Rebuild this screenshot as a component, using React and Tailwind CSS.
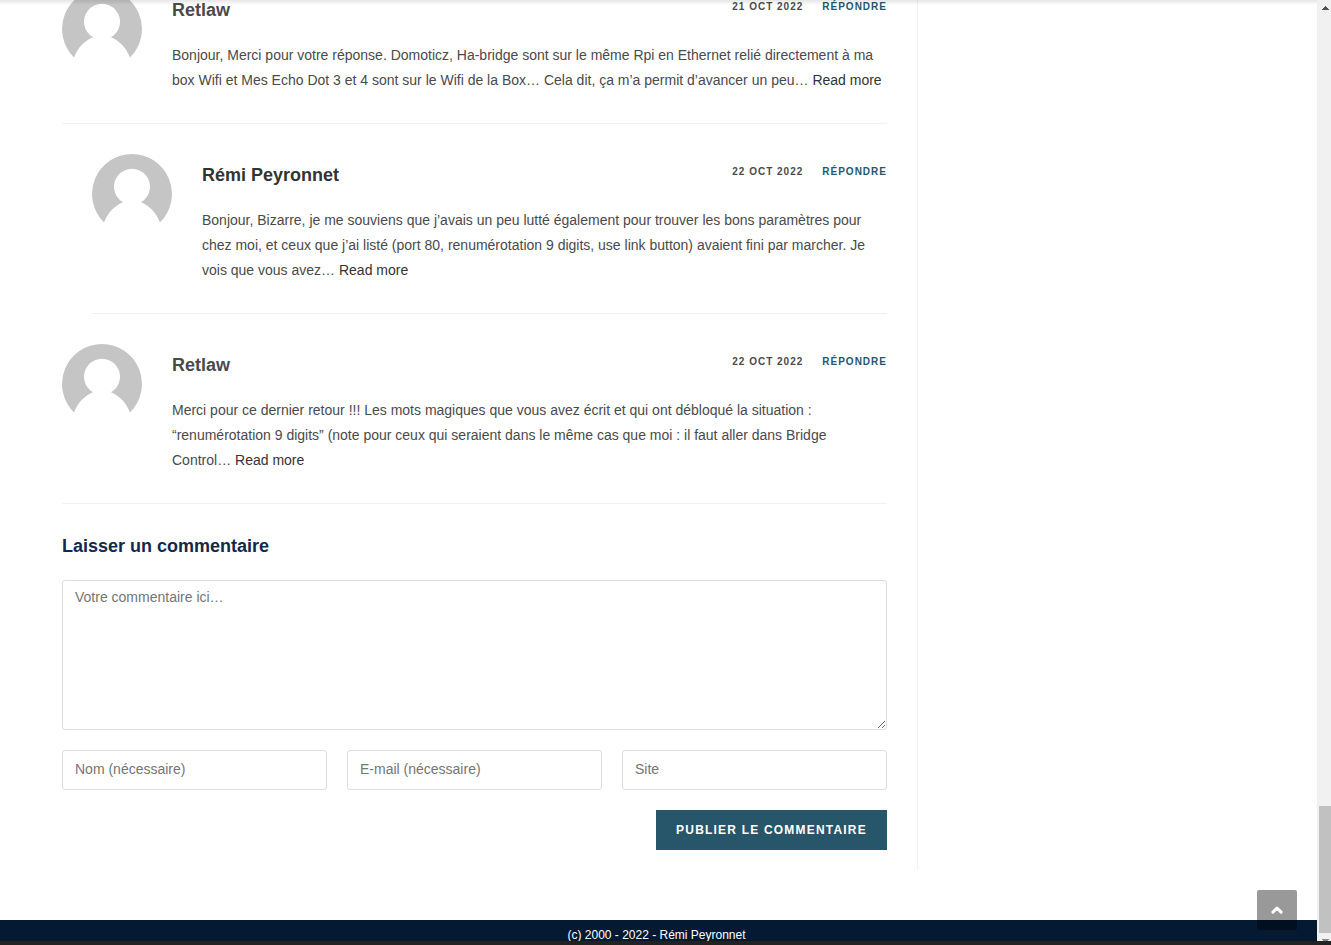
import React from "react";

const comments = [
  {
    author: "Retlaw",
    date: "21 Oct 2022",
    lines: [
      "Bonjour, Merci pour votre réponse. Domoticz, Ha-bridge sont sur le même Rpi en Ethernet relié directement à ma",
      "box Wifi et Mes Echo Dot 3 et 4 sont sur le Wifi de la Box… Cela dit, ça m’a permit d’avancer un peu…",
    ],
  },
  {
    author: "Rémi Peyronnet",
    date: "22 Oct 2022",
    nested: true,
    lines: [
      "Bonjour, Bizarre, je me souviens que j’avais un peu lutté également pour trouver les bons paramètres pour",
      "chez moi, et ceux que j’ai listé (port 80, renumérotation 9 digits, use link button) avaient fini par marcher. Je",
      "vois que vous avez…",
    ],
  },
  {
    author: "Retlaw",
    date: "22 Oct 2022",
    lines: [
      "Merci pour ce dernier retour !!! Les mots magiques que vous avez écrit et qui ont débloqué la situation :",
      "“renumérotation 9 digits” (note pour ceux qui seraient dans le même cas que moi : il faut aller dans Bridge",
      "Control…",
    ],
  },
];

function Avatar() {
  return (
    <svg className="size-20 shrink-0" viewBox="0 0 80 80" aria-hidden="true">
      <path
        fill="#c5c5c5"
        d="M40 0a40 40 0 0 1 28 68.500C64.500 59.500 58 52 49 48.300A18 18 0 1 0 31 48.300C22 52 15.500 59.500 12 68.500A40 40 0 0 1 40 0Z"
      />
    </svg>
  );
}

function Comment({ author, date, lines, nested }) {
  return (
    <article className={`flex gap-[30px] border-b border-[#f1f1f1] pt-[30px] pb-[30px] ${nested ? "ml-[30px]" : ""}`}>
      <Avatar />
      <div className="min-w-0 flex-1">
        <header className="flex items-start justify-between pt-[9px]">
          <h3 className={`text-[18px] leading-[25px] font-bold ${nested ? "text-[#333]" : "text-[#4a4a4a]"}`}>
            {author}
          </h3>
          <div className="flex gap-[19px] pt-[2px] text-[10px] leading-[14px] font-semibold tracking-[1px] uppercase">
            <span className="text-[#4a4a4a]">{date}</span>
            <a href="#repondre" className="text-[#27566d]">Répondre</a>
          </div>
        </header>
        <p className="mt-[20px] text-[14px] leading-[25px] whitespace-nowrap text-[#4a4a4a]">
          {lines.map((line, i) => (
            <span key={line} className="block">
              {line}
              {i === lines.length - 1 && <a href="#more" className="text-[#333]"> Read more</a>}
            </span>
          ))}
        </p>
      </div>
    </article>
  );
}

const field =
  "block h-[40px] rounded-[3px] border border-[#dddddd] bg-white px-[12px] pb-[2px] text-[14px] text-[#333] outline-none placeholder:text-[#757575]";

export default function App() {
  return (
    <div className="relative flex h-[945px] w-[1331px] flex-col overflow-hidden bg-white font-['Liberation_Sans',Arial,sans-serif]">
      <div className="flex h-[941px] shrink-0">
        <div className="relative flex w-[1317px] flex-col overflow-hidden">
          <main className="h-[870px] w-[918px] overflow-hidden border-r border-[#f1f1f1] pr-[30px] pl-[62px]">
            <section className="-mt-[41px]">
              {comments.map((c, i) => (
                <Comment key={i} {...c} />
              ))}
            </section>
            <form className="flex flex-col">
              <h2 className="mt-[30px] text-[18px] leading-[25px] font-bold text-[#13294b]">Laisser un commentaire</h2>
              <textarea
                className="mt-[21px] block h-[150px] w-full resize-y rounded-[3px] border border-[#dddddd] px-[12px] py-[4px] text-[14px] leading-[25px] outline-none placeholder:text-[#757575]"
                placeholder="Votre commentaire ici…"
              />
              <div className="mt-[20px] flex gap-[20px]">
                <input className={`${field} w-[265px]`} placeholder="Nom (nécessaire)" />
                <input className={`${field} w-[255px]`} placeholder="E-mail (nécessaire)" />
                <input className={`${field} w-[265px]`} placeholder="Site" />
              </div>
              <button
                type="button"
                className="mt-[20px] h-[40px] w-[231px] self-end bg-[#27566b] text-center text-[12px] font-bold tracking-[1.2px] whitespace-nowrap text-white uppercase"
              >
                Publier le commentaire
              </button>
            </form>
          </main>
          <footer className="mt-[50px] h-[21px] overflow-visible bg-[#041a33] pt-[5px] pr-[4px] text-center text-[12px] leading-[21px] text-white">
            (c) 2000 - 2022 - Rémi Peyronnet
          </footer>
          <div className="absolute top-0 left-0 h-[5px] w-full bg-linear-to-b from-black/10 to-transparent" />
          <a
            href="#top"
            aria-label="Haut de page"
            className="absolute top-[890px] left-[1257px] flex size-[40px] items-center justify-center rounded-[2px] bg-black/40 pb-[1px]"
          >
            <svg
              className="h-[8px] w-[12px]"
              viewBox="0 0 12 8"
              fill="none"
              stroke="#fff"
              strokeWidth="3"
              strokeLinecap="round"
              strokeLinejoin="round"
            >
              <path d="M1.900 6.100 6 2l4.100 4.100" />
            </svg>
          </a>
        </div>
        <div className="flex w-[14px] flex-col items-end bg-[#f1f1f1]">
          <svg className="mt-[6px] mr-[2px] h-[4px] w-[7px]" viewBox="0 0 7 4" shapeRendering="crispEdges">
            <path d="M3 0h1v1h1v1h1v1h1v1H0V3h1V2h1V1h1z" fill="#505050" />
          </svg>
          <div className="mt-[796px] h-[127px] w-[12px] bg-[#c1c1c1]" />
          <svg className="mt-[6px] mr-[2px] h-[2px] w-[7px]" viewBox="0 0 7 2" shapeRendering="crispEdges">
            <path d="M0 0h7v1H6v1H1V1H0z" fill="#8a8a8a" />
          </svg>
        </div>
      </div>
      <div className="h-[4px] bg-[#222222]" />
    </div>
  );
}
